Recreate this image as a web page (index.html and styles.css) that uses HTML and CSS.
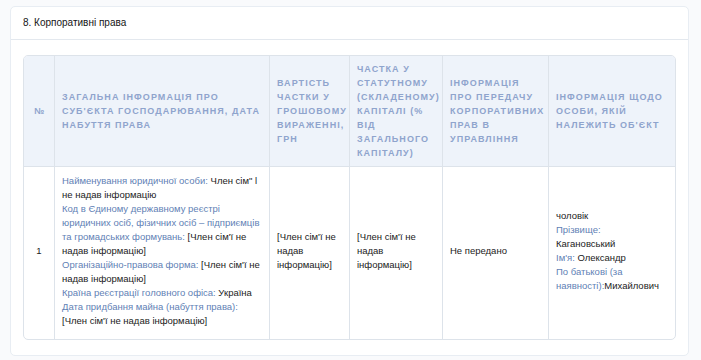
FILE: index.html
```html
<!DOCTYPE html>
<html lang="uk">
<head>
<meta charset="utf-8">
<title>Корпоративні права</title>
<link rel="stylesheet" href="styles.css">
</head>
<body>
<section class="card">
  <div class="card-head">8. Корпоративні права</div>
  <div class="card-body">
    <table class="tbl">
      <colgroup>
        <col class="c1"><col class="c2"><col class="c3"><col class="c4"><col class="c5"><col class="c6">
      </colgroup>
      <thead>
        <tr>
          <th class="num">№</th>
          <th>Загальна інформація про суб'єкта господарювання, дата набуття права</th>
          <th>Вартість частки у грошовому вираженні, грн</th>
          <th>Частка у статутному (складеному) капіталі (% від загального капіталу)</th>
          <th>Інформація про передачу корпоративних прав в управління</th>
          <th>Інформація щодо особи, якій належить об'єкт</th>
        </tr>
      </thead>
      <tbody>
        <tr>
          <td class="num">1</td>
          <td>
            <span class="lbl">Найменування юридичної особи:</span> Член сім" l не надав інформацію<br>
            <span class="lbl">Код в Єдиному державному реєстрі юридичних осіб, фізичних осіб – підприємців та громадських формувань:</span> [Член сім'ї не надав інформацію]<br>
            <span class="lbl">Організаційно-правова форма:</span> [Член сім'ї не надав інформацію]<br>
            <span class="lbl">Країна реєстрації головного офіса:</span> Україна<br>
            <span class="lbl">Дата придбання майна (набуття права):</span> [Член сім'ї не надав інформацію]
          </td>
          <td>[Член сім'ї не надав інформацію]</td>
          <td>[Член сім'ї не надав інформацію]</td>
          <td>Не передано</td>
          <td class="person">
            чоловік<br>
            <span class="lbl">Прізвище:</span> Кагановський<br>
            <span class="lbl">Ім'я:</span> Олександр<br>
            <span class="lbl">По батькові (за наявності):</span>Михайлович
          </td>
        </tr>
      </tbody>
    </table>
  </div>
</section>
</body>
</html>
```

FILE: styles.css
```css
html, body {
  margin: 0;
  padding: 0;
}
body {
  background: #f9fafc;
  font-family: "Liberation Sans", Arial, sans-serif;
  color: #1b1b1b;
  padding: 6px 12px 6px 10px;
}
.card {
  background: #fff;
  border: 1px solid #e8edf3;
  border-radius: 5px;
}
.card-head {
  font-size: 10px;
  line-height: 14px;
  padding: 9px 12px 9px;
  border-bottom: 1px solid #e3e8ee;
  color: #151515;
}
.card-body {
  padding: 15px 12px 15px 12px;
}
.tbl {
  width: 100%;
  border-collapse: separate;
  border-spacing: 0;
  border: 1px solid #dde3ea;
  border-radius: 5px;
  table-layout: fixed;
}
.c1 { width: 30px; }
.c2 { width: 215px; }
.c3 { width: 80px; }
.c4 { width: 93px; }
.c5 { width: 106px; }
.c6 { width: auto; }
.tbl th, .tbl td {
  border-left: 1px solid #dde3ea;
  padding: 6px 7px;
  vertical-align: middle;
  text-align: left;
}
.tbl th:first-child, .tbl td:first-child {
  border-left: none;
}
.tbl th {
  background: #eef3fa;
  color: #8fa4cd;
  font-size: 9px;
  line-height: 14px;
  font-weight: bold;
  text-transform: uppercase;
  letter-spacing: 1.05px;
  border-bottom: 1px solid #dde3ea;
}
.tbl thead th:first-child { border-top-left-radius: 4px; }
.tbl thead th:last-child { border-top-right-radius: 4px; }
.tbl td {
  font-size: 9.5px;
  line-height: 14px;
  color: #1b1b1b;
  padding: 7px 7px 11px;
}
.tbl td.person {
  padding-right: 20px;
}
.tbl .num {
  text-align: center;
  letter-spacing: 0;
}
.lbl {
  color: #5f7fb5;
}
```
